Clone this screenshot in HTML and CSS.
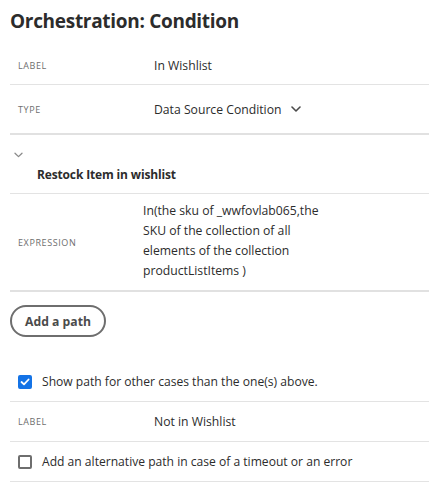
FILE: index.html
```html
<!DOCTYPE html>
<html>
<head>
<meta charset="utf-8">
<link rel="stylesheet" href="styles.css">
</head>
<body>
<div class="panel">
  <h1 class="title">Orchestration: Condition</h1>

  <div class="row row-label">
    <div class="key">LABEL</div>
    <div class="val">In Wishlist</div>
  </div>

  <div class="row row-type thick">
    <div class="key">TYPE</div>
    <div class="val select">Data Source Condition
      <svg class="caret" width="10" height="6" viewBox="0 0 10 6"><path d="M1 1 L5 5 L9 1" fill="none" stroke="#4b4b4b" stroke-width="1.6" stroke-linecap="round" stroke-linejoin="round"/></svg>
    </div>
  </div>

  <div class="section">
    <svg class="toggle" width="9" height="6" viewBox="0 0 9 6"><path d="M1 1.2 L4.5 4.6 L8 1.2" fill="none" stroke="#8a8a8a" stroke-width="1.3" stroke-linecap="round" stroke-linejoin="round"/></svg>
    <div class="section-title">Restock Item in wishlist</div>
  </div>

  <div class="row row-expr thick">
    <div class="key">EXPRESSION</div>
    <div class="val expr">In(the sku of _wwfovlab065,the<br>SKU of the collection of all<br>elements of the collection<br>productListItems )</div>
  </div>

  <div class="btn-wrap">
    <button class="btn">Add a path</button>
  </div>

  <div class="check-row check-first">
    <span class="box checked"><svg width="10" height="8" viewBox="0 0 10 8"><path d="M1.5 4 L4 6.4 L8.6 1.5" fill="none" stroke="#fff" stroke-width="1.8" stroke-linecap="round" stroke-linejoin="round"/></svg></span>
    <span class="check-text">Show path for other cases than the one(s) above.</span>
  </div>

  <div class="row row-label2">
    <div class="key">LABEL</div>
    <div class="val">Not in Wishlist</div>
  </div>

  <div class="check-row check-last">
    <span class="box"></span>
    <span class="check-text">Add an alternative path in case of a timeout or an error</span>
  </div>
</div>
</body>
</html>
```

FILE: styles.css
```css
html, body {
  margin: 0;
  padding: 0;
  background: #ffffff;
}

body {
  font-family: "Open Sans", "Noto Sans", sans-serif;
  color: #2c2c2c;
}

.panel {
  padding-left: 10px;
  width: 419px;
}

.title {
  margin: 0;
  height: 46px;
  padding-top: 7px;
  box-sizing: border-box;
  font-size: 19px;
  font-weight: 700;
  letter-spacing: -0.3px;
  color: #2c2c2c;
  line-height: 28px;
}

.row {
  display: flex;
  align-items: center;
  border-bottom: 1px solid #e3e3e3;
  box-sizing: border-box;
  padding-left: 8px;
}

.row.thick {
  border-bottom: 2px solid #e1e1e1;
}

.key {
  width: 136px;
  flex: none;
  font-size: 9px;
  letter-spacing: 0.6px;
  color: #6e6e6e;
}

.val {
  font-size: 12.2px;
  color: #2c2c2c;
}

.row-label { height: 39px; }
.row-type { height: 50px; }
.row-label2 { height: 40px; }

.select {
  display: flex;
  align-items: center;
  gap: 10px;
}

.caret { display: block; }

.section {
  height: 59px;
  border-bottom: 1px solid #e3e3e3;
  box-sizing: border-box;
}

.toggle {
  display: block;
  margin-left: 4px;
  padding-top: 17px;
}

.section-title {
  font-size: 12px;
  font-weight: 700;
  letter-spacing: -0.15px;
  margin-left: 27px;
  margin-top: 8px;
  color: #2c2c2c;
}

.row-expr {
  height: 98px;
}

.row-expr .key {
  width: 125px;
}

.expr {
  line-height: 20px;
  padding-bottom: 2px;
}

.btn-wrap {
  padding-top: 13px;
  height: 68px;
  box-sizing: border-box;
}

.btn {
  font-family: inherit;
  height: 32px;
  width: 96px;
  border: 2px solid #6e6e6e;
  border-radius: 16px;
  background: #fff;
  font-size: 12.2px;
  font-weight: 700;
  color: #4b4b4b;
  padding: 0;
}

.check-row {
  display: flex;
  align-items: center;
  gap: 10px;
  padding-left: 8px;
  border-bottom: 1px solid #e3e3e3;
  box-sizing: border-box;
}

.check-first { height: 42px; padding-top: 2px; }
.check-last { height: 40px; }

.box {
  width: 14px;
  height: 14px;
  box-sizing: border-box;
  border: 2px solid #6e6e6e;
  border-radius: 2px;
  display: flex;
  align-items: center;
  justify-content: center;
  flex: none;
}

.box.checked {
  background: #1473e6;
  border-color: #1473e6;
}

.box svg { display: block; }

.check-text {
  font-size: 12.1px;
  color: #2c2c2c;
}
```
